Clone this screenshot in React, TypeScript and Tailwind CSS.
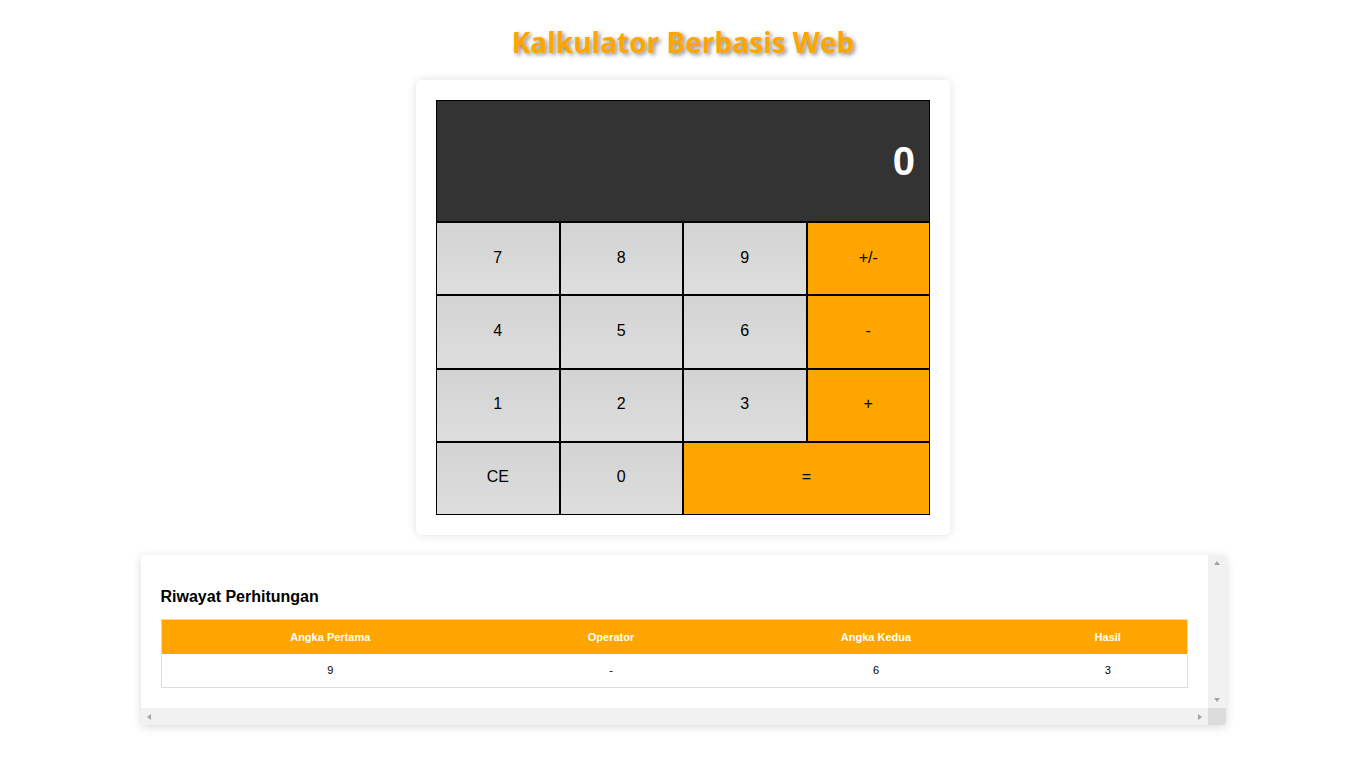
import { useState } from "react";

type Row = {
  a: string;
  op: string;
  b: string;
  hasil: string;
};

const keys: { label: string; kind: "num" | "op"; wide?: boolean }[] = [
  { label: "7", kind: "num" },
  { label: "8", kind: "num" },
  { label: "9", kind: "num" },
  { label: "+/-", kind: "op" },
  { label: "4", kind: "num" },
  { label: "5", kind: "num" },
  { label: "6", kind: "num" },
  { label: "-", kind: "op" },
  { label: "1", kind: "num" },
  { label: "2", kind: "num" },
  { label: "3", kind: "num" },
  { label: "+", kind: "op" },
  { label: "CE", kind: "num" },
  { label: "0", kind: "num" },
  { label: "=", kind: "op", wide: true },
];

// small triangle for the fake scrollbar arrows
function Arrow({ dir }: { dir: "up" | "down" | "left" | "right" }) {
  const pts = {
    up: "1,6 4,2 7,6",
    down: "1,2 4,6 7,2",
    left: "6,1 2,4 6,7",
    right: "2,1 6,4 2,7",
  }[dir];
  return (
    <svg width="8" height="8" viewBox="0 0 8 8">
      <polygon points={pts} fill="#a3a3a3" />
    </svg>
  );
}

export default function App() {
  const [display] = useState("0");
  const [history] = useState<Row[]>([{ a: "9", op: "-", b: "6", hasil: "3" }]);

  return (
    <div className="min-h-screen bg-white flex flex-col items-center pt-[24px] font-['Liberation_Sans',Arial,sans-serif]">
      <h1 className="text-[28px] leading-[36px] font-bold text-[#ffa500] font-['Open_Sans',sans-serif] [text-shadow:2px_2px_4px_rgba(0,0,0,0.45)]">
        Kalkulator Berbasis Web
      </h1>

      <div className="mt-[20px] w-[534px] bg-white p-5 rounded-[5px] shadow-[0_0_10px_rgba(0,0,0,0.12)]">
        <div className="h-[122px] bg-[#333333] border border-black flex items-center justify-end pr-[14px] text-white text-[40px] font-bold">
          {display}
        </div>
        <div className="grid grid-cols-4 grid-rows-4 h-[293px]">
          {keys.map((k) => (
            <button
              key={k.label}
              className={`border border-black text-[16px] leading-[18px] pb-[2px] text-black ${
                k.wide ? "col-span-2" : ""
              } ${
                k.kind === "op"
                  ? "bg-[#ffa500]"
                  : "bg-gradient-to-b from-[#d3d3d3] to-[#dedede]"
              }`}
            >
              {k.label}
            </button>
          ))}
        </div>
      </div>

      <div className="mt-[20px] w-[1085px] h-[170px] flex flex-col bg-white shadow-[0_2px_10px_rgba(0,0,0,0.15)] rounded-[3px] overflow-hidden">
        <div className="flex flex-1 min-h-0">
          <div className="flex-1 p-5 pt-[33px]">
            <h3 className="text-[16px] font-bold text-black leading-[18px] mb-[13px]">
              Riwayat Perhitungan
            </h3>
            <table className="w-[1027px] border border-[#dddddd] border-collapse text-[11px]">
              <thead>
                <tr className="bg-[#ffa500] text-white font-bold h-[34px]">
                  <th className="w-[338px]">Angka Pertama</th>
                  <th className="w-[224px]">Operator</th>
                  <th className="w-[306px]">Angka Kedua</th>
                  <th>Hasil</th>
                </tr>
              </thead>
              <tbody>
                {history.map((r, i) => (
                  <tr key={i} className="h-[34px] text-center text-black">
                    <td>{r.a}</td>
                    <td>{r.op}</td>
                    <td>{r.b}</td>
                    <td>{r.hasil}</td>
                  </tr>
                ))}
              </tbody>
            </table>
          </div>
          <div className="w-[18px] bg-[#f1f1f1] flex flex-col justify-between items-center py-[4px]">
            <Arrow dir="up" />
            <Arrow dir="down" />
          </div>
        </div>
        <div className="flex h-[17px]">
          <div className="flex-1 bg-[#f1f1f1] flex justify-between items-center px-[4px]">
            <Arrow dir="left" />
            <Arrow dir="right" />
          </div>
          <div className="w-[18px] bg-[#dcdcdc]" />
        </div>
      </div>
    </div>
  );
}
